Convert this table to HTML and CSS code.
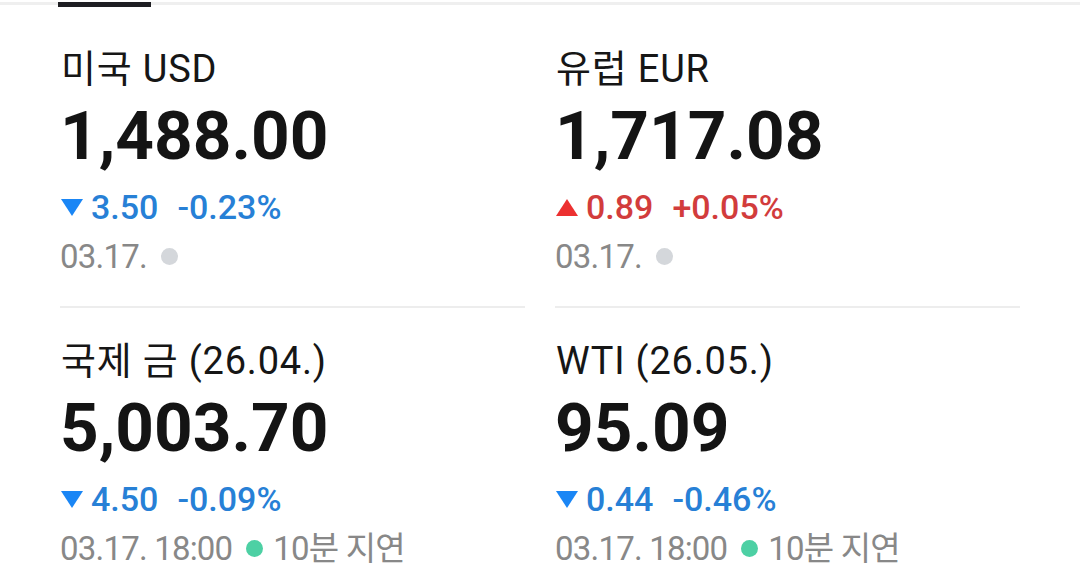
FILE: index.html
```html
<!DOCTYPE html>
<html lang="ko">
<head>
<meta charset="utf-8">
<link rel="stylesheet" href="styles.css">
</head>
<body>
<div class="tabbar"><div class="tabline"></div><div class="indicator"></div></div>
<div class="grid">
  <div class="cell">
    <div class="title">미국 USD</div>
    <div class="price">1,488.00</div>
    <div class="change down"><svg class="tri" viewBox="0 0 22 17"><polygon points="0,0 22,0 11,17"/></svg><span class="amt">3.50</span><span class="pct">-0.23%</span></div>
    <div class="date">03.17.<span class="dot gray"></span></div>
  </div>
  <div class="cell">
    <div class="title">유럽 EUR</div>
    <div class="price">1,717.08</div>
    <div class="change up"><svg class="tri" viewBox="0 0 22 17"><polygon points="11,0 22,17 0,17"/></svg><span class="amt">0.89</span><span class="pct">+0.05%</span></div>
    <div class="date">03.17.<span class="dot gray"></span></div>
  </div>
  <div class="cell last">
    <div class="title">국제 금 (26.04.)</div>
    <div class="price">5,003.70</div>
    <div class="change down"><svg class="tri" viewBox="0 0 22 17"><polygon points="0,0 22,0 11,17"/></svg><span class="amt">4.50</span><span class="pct">-0.09%</span></div>
    <div class="date"><span class="time">03.17. 18:00</span><span class="dot green"></span>10분 지연</div>
  </div>
  <div class="cell last">
    <div class="title">WTI (26.05.)</div>
    <div class="price">95.09</div>
    <div class="change down"><svg class="tri" viewBox="0 0 22 17"><polygon points="0,0 22,0 11,17"/></svg><span class="amt">0.44</span><span class="pct">-0.46%</span></div>
    <div class="date"><span class="time">03.17. 18:00</span><span class="dot green"></span>10분 지연</div>
  </div>
</div>
</body>
</html>
```

FILE: styles.css
```css
html, body {
  margin: 0;
  padding: 0;
  background: #ffffff;
  font-family: Roboto, "Noto Sans CJK KR", sans-serif;
  color: #151515;
  overflow: hidden;
}
.tabbar {
  position: relative;
  height: 5px;
}
.tabline {
  height: 3px;
  margin-top: 2px;
  background: #efefef;
}
.indicator {
  position: absolute;
  left: 58px;
  top: 0;
  width: 93px;
  height: 5px;
  background: #1e1e22;
}
.grid {
  display: grid;
  grid-template-columns: 465px 465px;
  column-gap: 30px;
  padding: 9px 60px 0 60px;
}
.cell {
  padding: 31px 0 27px 0;
  border-bottom: 2px solid #ededed;
}
.cell.last {
  border-bottom: none;
}
.title {
  font-size: 38px;
  line-height: 44px;
  letter-spacing: 0.8px;
  color: #161616;
  margin-left: 1px;
}
.price {
  font-size: 67.5px;
  line-height: 90px;
  font-weight: 700;
  color: #141414;
}
.change {
  margin-top: 4px;
  font-size: 34px;
  line-height: 44px;
  font-weight: 500;
  display: flex;
  align-items: center;
}
.tri {
  width: 22px;
  height: 17px;
  margin-left: 1px;
  margin-right: 8px;
}
.down { color: #2780d6; }
.down .tri { fill: #1a86f5; }
.up { color: #d23c3c; }
.up .tri { fill: #ec3030; }
.pct {
  margin-left: 19px;
}
.date {
  margin-top: 6px;
  font-size: 33px;
  line-height: 44px;
  color: #888888;
  display: flex;
  align-items: center;
  letter-spacing: -0.8px;
}
.dot {
  display: inline-block;
  flex: none;
  width: 17px;
  height: 17px;
  border-radius: 50%;
  margin: -2px 10px 0 14px;
}
.dot.gray { background: #d4d7db; }
.dot.green { background: #4dd0a4; }
```
